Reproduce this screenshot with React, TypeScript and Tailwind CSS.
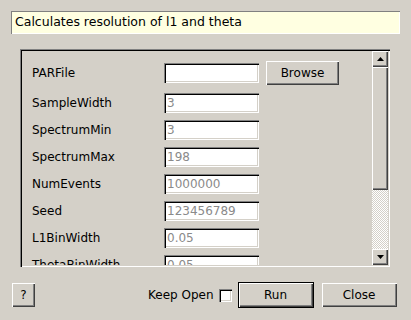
import React from "react";

const raised =
  "bg-[#d4d0c8] shadow-[inset_1px_1px_0_#ffffff,inset_-1px_-1px_0_#404040,inset_-2px_-2px_0_#808080]";
const sunken =
  "shadow-[inset_1px_1px_0_#808080,inset_2px_2px_0_#000000,inset_-1px_-1px_0_#ffffff,inset_-2px_-2px_0_#d4d0c8]";

const rows: { label: string; value: string }[] = [
  { label: "SampleWidth", value: "3" },
  { label: "SpectrumMin", value: "3" },
  { label: "SpectrumMax", value: "198" },
  { label: "NumEvents", value: "1000000" },
  { label: "Seed", value: "123456789" },
  { label: "L1BinWidth", value: "0.05" },
  { label: "ThetaBinWidth", value: "0.05" },
  { label: "ThetaMax", value: "1" },
];

function Field({ value }: { value: string }) {
  return (
    <div
      className={`w-[95px] h-[20px] bg-white ${sunken} flex items-center pl-[3px] text-[#8a8a8a] leading-none`}
    >
      {value}
    </div>
  );
}

export default function App() {
  return (
    <div
      className="w-[411px] h-[320px] bg-[#d4d0c8] text-[12px] text-black flex flex-col overflow-hidden"
      style={{ fontFamily: '"DejaVu Sans", sans-serif' }}
    >
      <div className="mt-[11px] ml-[11px] w-[389px] h-[23px] bg-[#ffffe1] shadow-[inset_1px_1px_0_#808080,inset_-1px_-1px_0_#ffffff] flex items-center pl-[4px] text-[12.5px]">
        Calculates resolution of l1 and theta
      </div>

      <div className={`mt-[15px] ml-[20px] w-[370px] h-[218px] ${sunken} p-[2px] flex`}>
        <div className="flex-1 overflow-hidden flex flex-col gap-[7px] pt-[10px] pl-[10px]">
          <div className="h-[25px] flex items-start shrink-0">
            <div className="w-[132px] h-[24px] flex items-center">PARFile</div>
            <div className="mt-[2px]">
              <Field value="" />
            </div>
            <div
              className={`ml-[7px] w-[73px] h-[24px] ${raised} flex items-center justify-center`}
            >
              Browse
            </div>
          </div>
          {rows.map((r) => (
            <div key={r.label} className="h-[20px] flex items-center shrink-0">
              <div className="w-[132px]">{r.label}</div>
              <Field value={r.value} />
            </div>
          ))}
        </div>
        <div className="w-[16px] flex flex-col">
          <div className={`h-[16px] ${raised} flex items-center justify-center`}>
            <svg width="7" height="4" viewBox="0 0 7 4">
              <path d="M3.5 0 L7 4 L0 4 Z" fill="#000" />
            </svg>
          </div>
          <div className={`h-[123px] ${raised}`} />
          <div className="flex-1 bg-[repeating-conic-gradient(#ffffff_0_25%,#d4d0c8_0_50%)] bg-[length:2px_2px]" />
          <div className={`h-[16px] ${raised} flex items-center justify-center`}>
            <svg width="7" height="4" viewBox="0 0 7 4">
              <path d="M0 0 L7 0 L3.5 4 Z" fill="#000" />
            </svg>
          </div>
        </div>
      </div>

      <div className="mt-[15px] h-[26px] flex items-center pl-[12px]">
        <div className={`w-[23px] h-[24px] ${raised} flex items-center justify-center`}>?</div>
        <div className="ml-[113px]">Keep Open</div>
        <div className={`ml-[5px] w-[13px] h-[13px] bg-white ${sunken}`} />
        <div className="ml-[6px] w-[76px] h-[26px] border border-black">
          <div className={`w-full h-full ${raised} flex items-center justify-center`}>Run</div>
        </div>
        <div className={`ml-[8px] w-[75px] h-[24px] ${raised} flex items-center justify-center`}>
          Close
        </div>
      </div>
    </div>
  );
}
